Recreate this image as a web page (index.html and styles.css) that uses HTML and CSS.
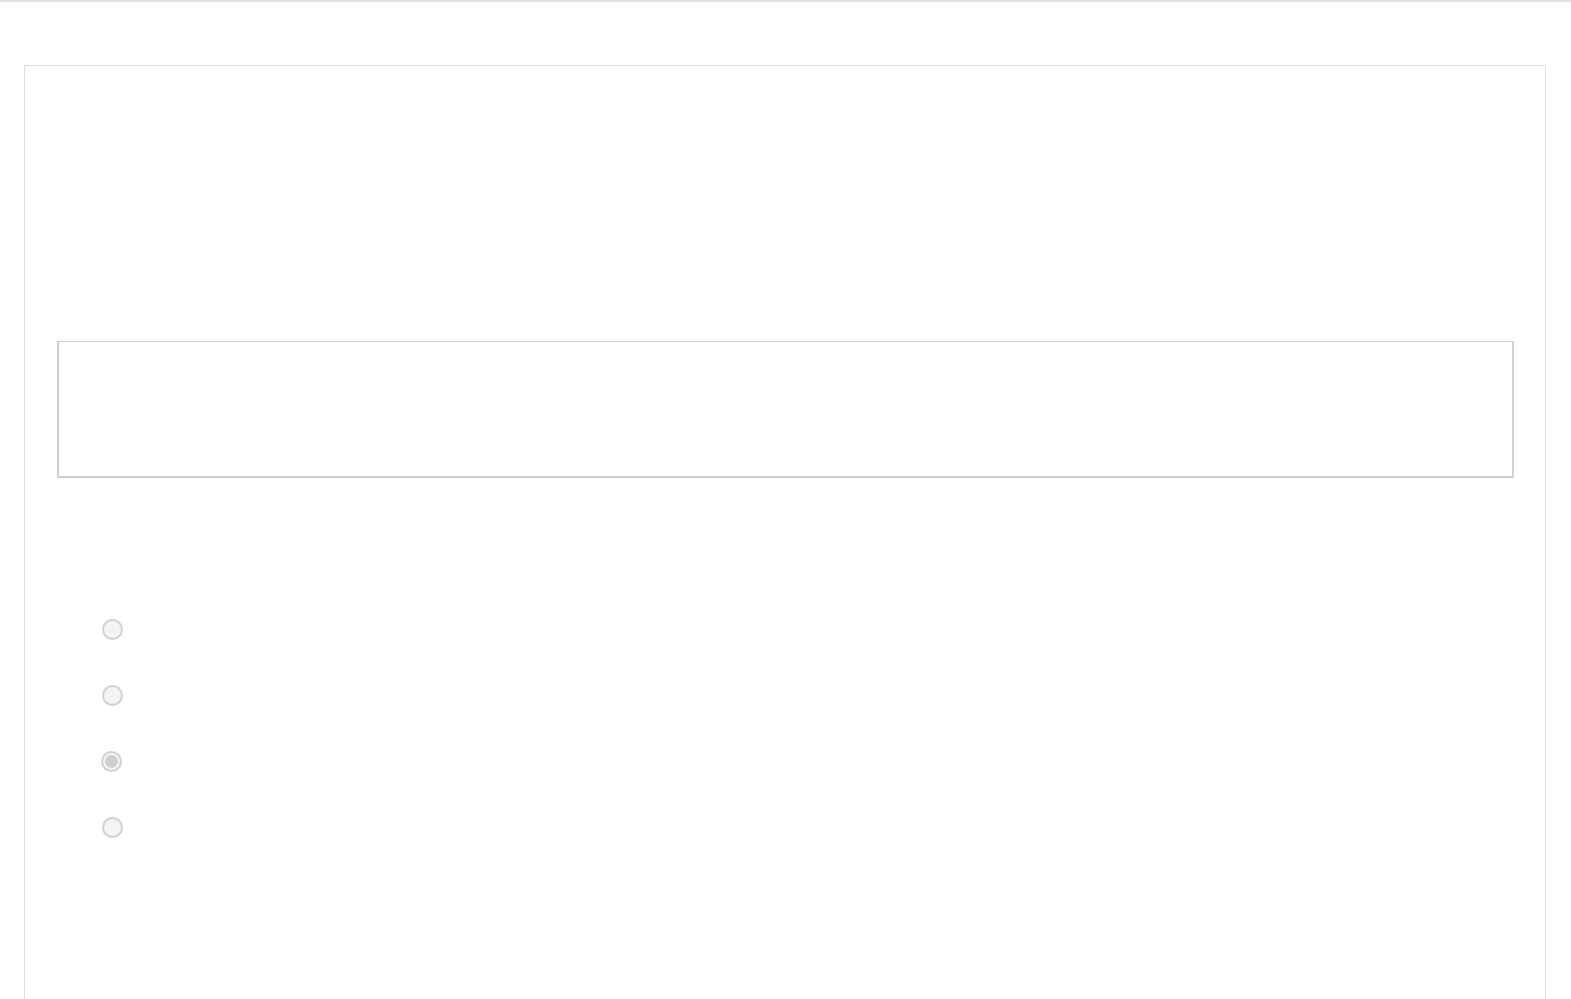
FILE: index.html
```html
<!DOCTYPE html>
<html>
<head>
<meta charset="utf-8">
<link rel="stylesheet" href="styles.css">
</head>
<body>
<div class="topline"></div>
<main class="page">
  <section class="card">
    <div class="answer-box"></div>
    <ul class="options">
      <li class="option"><span class="radio"></span></li>
      <li class="option"><span class="radio"></span></li>
      <li class="option"><span class="radio checked"></span></li>
      <li class="option"><span class="radio"></span></li>
    </ul>
  </section>
</main>
</body>
</html>
```
FILE: styles.css
```css
html, body {
  margin: 0;
  padding: 0;
  background: #ffffff;
  font-family: "Liberation Sans", Arial, sans-serif;
  overflow: hidden;
  height: 999px;
}
.topline {
  height: 2px;
  background: #e4e1e1;
}
.page {
  padding: 63px 25px 0 24px;
}
.card {
  border: 1px solid #dfdfdf;
  height: 1000px;
  padding: 275px 31px 0 32px;
  box-sizing: border-box;
}
.answer-box {
  height: 137px;
  border-style: solid;
  border-color: #cdd1da;
  border-width: 1px 2px 2px 2px;
  box-sizing: border-box;
}
.options {
  list-style: none;
  margin: 0;
  padding: 141px 0 0 45px;
  display: flex;
  flex-direction: column;
  gap: 45px;
}
.option {
  height: 21px;
  display: flex;
  align-items: center;
}
.radio {
  width: 17px;
  height: 17px;
  border: 2px solid #d2d2d2;
  border-radius: 50%;
  background: #f4f4f4;
  position: relative;
}
.radio.checked {
  margin-left: -1px;
}
.radio.checked::after {
  content: "";
  position: absolute;
  left: 2px;
  top: 2px;
  width: 13px;
  height: 13px;
  border-radius: 50%;
  background: #cfcfcf;
}
```
